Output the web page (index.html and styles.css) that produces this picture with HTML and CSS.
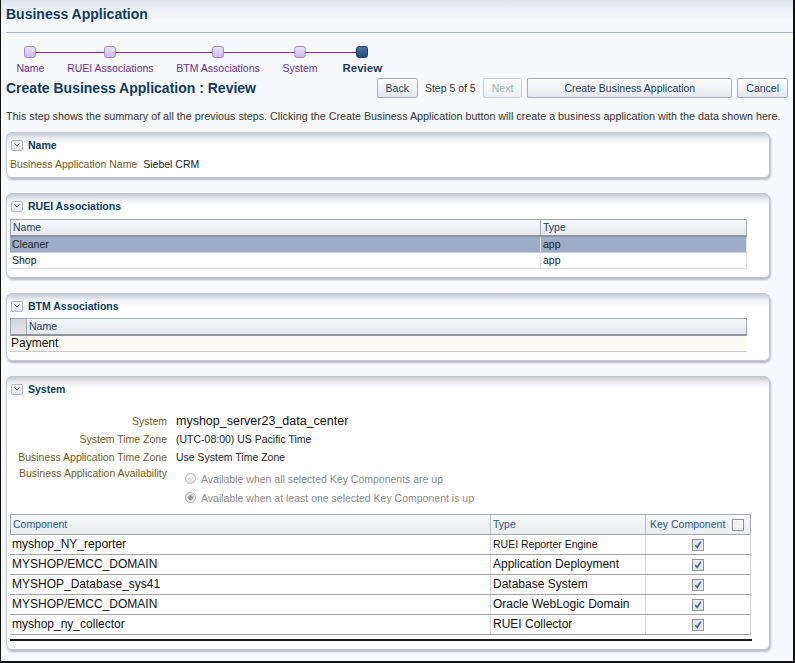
FILE: index.html
```html
<!DOCTYPE html>
<html>
<head>
<meta charset="utf-8">
<title>Business Application</title>
<link rel="stylesheet" href="styles.css">
</head>
<body>
<div class="page">
  <div class="top">
    <h1 class="app-title">Business Application</h1>
  </div>

  <div class="train">
    <div class="step"><div class="stop"><span class="ln"></span><span class="sq"></span><span class="ln"></span></div><div class="lbl">Name</div></div>
    <div class="step"><div class="stop"><span class="ln"></span><span class="sq"></span><span class="ln"></span></div><div class="lbl">RUEI Associations</div></div>
    <div class="step"><div class="stop"><span class="ln"></span><span class="sq"></span><span class="ln"></span></div><div class="lbl">BTM Associations</div></div>
    <div class="step"><div class="stop"><span class="ln"></span><span class="sq"></span><span class="ln"></span></div><div class="lbl">System</div></div>
    <div class="step current"><div class="stop"><span class="ln"></span><span class="sq"></span><span class="ln"></span></div><div class="lbl">Review</div></div>
  </div>

  <div class="titlebar">
    <h2 class="page-title">Create Business Application : Review</h2>
    <div class="actions">
      <button class="btn">Back</button>
      <span class="stepinfo">Step 5 of 5</span>
      <button class="btn" disabled>Next</button>
      <button class="btn wide">Create Business Application</button>
      <button class="btn">Cancel</button>
    </div>
  </div>

  <p class="intro">This step shows the summary of all the previous steps. Clicking the Create Business Application button will create a business application with the data shown here.</p>

  <section class="panel name-panel">
    <div class="ph"><span class="tog"><svg width="8" height="6" viewBox="0 0 8 6"><polyline points="1.5,1.5 4,4.2 6.5,1.5" fill="none" stroke="#444" stroke-width="1"/></svg></span><span class="pt">Name</span></div>
    <div class="frow"><span class="flabel">Business Application Name</span><span class="fval">Siebel CRM</span></div>
  </section>

  <section class="panel">
    <div class="ph"><span class="tog"><svg width="8" height="6" viewBox="0 0 8 6"><polyline points="1.5,1.5 4,4.2 6.5,1.5" fill="none" stroke="#444" stroke-width="1"/></svg></span><span class="pt">RUEI Associations</span></div>
    <div class="tbl ruei">
      <div class="thead"><div class="c-name">Name</div><div class="c-type">Type</div></div>
      <div class="trow sel"><div class="c-name">Cleaner</div><div class="c-type">app</div></div>
      <div class="trow"><div class="c-name">Shop</div><div class="c-type">app</div></div>
    </div>
  </section>

  <section class="panel">
    <div class="ph"><span class="tog"><svg width="8" height="6" viewBox="0 0 8 6"><polyline points="1.5,1.5 4,4.2 6.5,1.5" fill="none" stroke="#444" stroke-width="1"/></svg></span><span class="pt">BTM Associations</span></div>
    <div class="tbl btm">
      <div class="thead"><div class="c-sel"></div><div class="c-rest">Name</div></div>
      <div class="trow cream"><div class="c-all">Payment</div></div>
    </div>
  </section>

  <section class="panel sys-panel">
    <div class="ph"><span class="tog"><svg width="8" height="6" viewBox="0 0 8 6"><polyline points="1.5,1.5 4,4.2 6.5,1.5" fill="none" stroke="#444" stroke-width="1"/></svg></span><span class="pt">System</span></div>
    <div class="form">
      <div class="l">System</div><div class="v big">myshop_server23_data_center</div>
      <div class="l">System Time Zone</div><div class="v">(UTC-08:00) US Pacific Time</div>
      <div class="l">Business Application Time Zone</div><div class="v">Use System Time Zone</div>
      <div class="l l-first">Business Application Availability</div>
      <div class="radios">
        <div class="ropt"><span class="radio"></span>Available when all selected Key Components are up</div>
        <div class="ropt"><span class="radio on"></span>Available when at least one selected Key Component is up</div>
      </div>
    </div>
    <div class="tbl comp">
      <div class="thead">
        <div class="k-comp">Component</div>
        <div class="k-type">Type</div>
        <div class="k-key"><span>Key Component</span><svg class="cb" width="12" height="12" viewBox="0 0 12 12"><rect x="0.5" y="0.5" width="11" height="11" fill="#f3f3f3" stroke="#8e939b"/><rect x="1.5" y="1.5" width="9" height="9" fill="none" stroke="#fff"/></svg></div>
      </div>
      <div class="trow">
        <div class="k-comp">myshop_NY_reporter</div>
        <div class="k-type sm">RUEI Reporter Engine</div>
        <div class="k-key"><svg class="cb" width="12" height="12" viewBox="0 0 12 12"><rect x="0.5" y="0.5" width="11" height="11" fill="#e6e7ea" stroke="#8e939b"/><path d="M3.2 6 L5.2 8.4 L8.8 2.8" fill="none" stroke="#4d5d8e" stroke-width="1.6"/></svg></div>
      </div>
      <div class="trow">
        <div class="k-comp">MYSHOP/EMCC_DOMAIN</div>
        <div class="k-type">Application Deployment</div>
        <div class="k-key"><svg class="cb" width="12" height="12" viewBox="0 0 12 12"><rect x="0.5" y="0.5" width="11" height="11" fill="#e6e7ea" stroke="#8e939b"/><path d="M3.2 6 L5.2 8.4 L8.8 2.8" fill="none" stroke="#4d5d8e" stroke-width="1.6"/></svg></div>
      </div>
      <div class="trow">
        <div class="k-comp">MYSHOP_Database_sys41</div>
        <div class="k-type">Database System</div>
        <div class="k-key"><svg class="cb" width="12" height="12" viewBox="0 0 12 12"><rect x="0.5" y="0.5" width="11" height="11" fill="#e6e7ea" stroke="#8e939b"/><path d="M3.2 6 L5.2 8.4 L8.8 2.8" fill="none" stroke="#4d5d8e" stroke-width="1.6"/></svg></div>
      </div>
      <div class="trow">
        <div class="k-comp">MYSHOP/EMCC_DOMAIN</div>
        <div class="k-type">Oracle WebLogic Domain</div>
        <div class="k-key"><svg class="cb" width="12" height="12" viewBox="0 0 12 12"><rect x="0.5" y="0.5" width="11" height="11" fill="#e6e7ea" stroke="#8e939b"/><path d="M3.2 6 L5.2 8.4 L8.8 2.8" fill="none" stroke="#4d5d8e" stroke-width="1.6"/></svg></div>
      </div>
      <div class="trow">
        <div class="k-comp">myshop_ny_collector</div>
        <div class="k-type">RUEI Collector</div>
        <div class="k-key"><svg class="cb" width="12" height="12" viewBox="0 0 12 12"><rect x="0.5" y="0.5" width="11" height="11" fill="#e6e7ea" stroke="#8e939b"/><path d="M3.2 6 L5.2 8.4 L8.8 2.8" fill="none" stroke="#4d5d8e" stroke-width="1.6"/></svg></div>
      </div>
    </div>
    <div class="tfoot-line"></div>
  </section>
</div>
</body>
</html>
```

FILE: styles.css
```css
* { box-sizing: border-box; }
html, body { margin: 0; padding: 0; }
body {
  font-family: "Liberation Sans", Arial, sans-serif;
  font-size: 10.5px;
  color: #222;
  background: #f7f9fc;
}
.page {
  width: 795px;
  height: 663px;
  border-left: 1px solid #111;
  border-right: 2px solid #111;
  border-bottom: 2px solid #111;
  background: #f7f9fc linear-gradient(#dfe4ee 0, #f7f9fc 18px) no-repeat;
  overflow: hidden;
}

/* header */
.top {
  margin-left: 5px;
  height: 33px;
  padding-bottom: 5px;
  border-bottom: 1px solid #a9b2c2;
  display: flex;
  align-items: center;
}
.app-title {
  margin: 0;
  font-size: 14px;
  font-weight: bold;
  color: #0f3a5c;
}

/* train */
.train {
  display: flex;
  margin-left: 4px;
  padding-top: 13px;
}
.step { display: flex; flex-direction: column; }
.stop { display: flex; align-items: center; height: 12px; }
.ln { flex: 1; height: 1px; background: #8a2b93; }
.step:first-child .ln:first-child,
.step:last-child .ln:last-child { background: transparent; }
.sq {
  width: 12px;
  height: 12px;
  border: 1px solid #a48cd4;
  border-radius: 3px;
  background: linear-gradient(#ebe3fa, #cdbfee);
}
.step.current .sq {
  background: linear-gradient(#4a77a8, #1f4b7a);
  border-color: #1d3f66;
}
.lbl {
  padding: 0 11.4px;
  margin-top: 4px;
  line-height: 13px;
  color: #6a2d8a;
  white-space: nowrap;
}
.step.current .lbl {
  font-weight: bold;
  font-size: 11.5px;
  padding: 0 13.5px;
  color: #1c3b5c;
}

/* title bar */
.titlebar {
  display: flex;
  align-items: center;
  justify-content: space-between;
  height: 20px;
  margin-top: 3px;
  padding: 0 5px;
}
.page-title {
  margin: 0;
  font-size: 14px;
  font-weight: bold;
  color: #0f3a5c;
}
.actions { display: flex; align-items: center; gap: 5px; }
.btn {
  font-family: inherit;
  font-size: 10.5px;
  height: 20px;
  padding: 0 8px;
  border: 1px solid #a5adba;
  border-radius: 2px;
  background: linear-gradient(#ffffff, #e3e7ee);
  color: #1c3a5a;
}
.btn.wide { width: 205px; }
.btn:disabled {
  color: #a9afb9;
  border-color: #c8cdd5;
  background: linear-gradient(#fbfcfd, #eceff3);
}
.stepinfo { color: #333; padding: 0 2px; }

.intro {
  margin: 11px 0 9px 5px;
  line-height: 14px;
  font-size: 10.75px;
  white-space: nowrap;
  color: #333;
}

/* panels */
.panel {
  width: 764px;
  margin: 0 0 15px 5px;
  border: 1px solid #c2c6ce;
  border-radius: 6px;
  background: linear-gradient(#c8ccd5 0, #eef0f4 6px, #ffffff 12px);
  box-shadow: 1px 2px 2px rgba(60, 70, 90, 0.35);
  padding: 4px 0 8px;
}
.name-panel { padding-bottom: 5px; }
.ph {
  display: flex;
  align-items: center;
  height: 16px;
  padding-left: 4px;
  gap: 5px;
}
.tog {
  width: 12px;
  height: 11px;
  border: 1px solid #b1b7c2;
  border-radius: 2px;
  background: linear-gradient(#ffffff, #e1e5ec);
  display: flex;
  align-items: center;
  justify-content: center;
}
.pt { font-weight: bold; color: #0b3b5e; }

.frow {
  display: flex;
  gap: 6px;
  padding-left: 3px;
  margin-top: 3px;
  line-height: 16px;
}
.flabel { color: #735b1e; }
.fval { color: #222; }

/* tables */
.tbl { margin: 5px 0 0 3px; }
.thead {
  display: flex;
  height: 18px;
  border: 1px solid #a2a6ad;
  border-bottom: 2px solid #8f939a;
  background: linear-gradient(#f7f8fa, #e5e7ec);
  color: #1d3a60;
}
.thead > div { line-height: 15px; padding-left: 2px; }
.trow { display: flex; height: 16px; border-bottom: 1px solid #d7dade; }
.trow > div { line-height: 15px; padding-left: 2px; }

.ruei { width: 737px; }
.ruei .c-name { width: 530px; border-right: 1px solid #a2a6ad; }
.ruei .trow .c-name { width: 531px; border-right: 1px solid #e3e5e8; }
.ruei .c-type { flex: 1; }
.ruei .trow .c-type { border-right: 1px solid #e3e5e8; }
.trow.sel { background: #9dacc7; border-bottom-color: #c5ccd8; }
.trow.sel > div { border-right-color: #b8c2d4; }

.btm { width: 737px; margin-top: 4px; }
.btm .c-sel {
  width: 16px;
  border-right: 1px solid #a2a6ad;
  background: linear-gradient(#d2d5dc, #e4e6ea);
}
.btm .c-rest { flex: 1; }
.trow.cream { background: #fcfcf5; border-bottom-color: #c9c9c9; }
.btm .c-all { padding-left: 1px; font-size: 12px; color: #111; }

/* system form */
.form {
  display: grid;
  grid-template-columns: 160px 1fr;
  column-gap: 9px;
  margin-top: 15px;
}
.form .l { text-align: right; color: #735b1e; line-height: 18px; }
.form .l.l-first { line-height: 14px; }
.form .v { line-height: 18px; color: #222; }
.form .v.big { font-size: 12.5px; color: #111; }
.radios { padding: 3px 0 0 9px; }
.ropt {
  display: flex;
  align-items: center;
  gap: 5px;
  height: 19px;
  color: #8c8c8c;
}
.radio {
  width: 11px;
  height: 11px;
  border-radius: 50%;
  border: 1px solid #b9b9b9;
  background: linear-gradient(#f8f8f8, #e2e2e2);
}
.radio.on {
  background: radial-gradient(circle, #9a9a9a 0, #9a9a9a 2px, #d4d4d4 2.8px, #f3f3f3 4px);
  border-color: #a8a8a8;
}

.comp { width: 741px; margin-top: 7px; }
.comp .thead {
  height: 21px;
  border: 1px solid #a6a9b0;
  border-bottom: 1px solid #a6a9b0;
  background: linear-gradient(#f7f8fa, #eaecf0);
  color: #2a568a;
}
.comp .thead > div { line-height: 19px; border-right: 1px solid #b9bdc4; }
.comp .thead > div:last-child { border-right: none; }
.comp .trow { height: 20px; border-bottom: 1px solid #a3a3a3; background: #fff; }
.comp .trow > div {
  line-height: 19px;
  font-size: 12px;
  color: #111;
  border-right: 1px solid #d6d6d6;
}
.comp .trow > div.sm { font-size: 10.5px; }
.k-comp { width: 481px; }
.comp .thead .k-comp { width: 480px; }
.k-type { width: 155px; }
.k-key { flex: 1; }
.comp .thead .k-key {
  display: flex;
  align-items: center;
  justify-content: space-between;
  padding: 0 6px 0 4px;
}
.comp .trow .k-key {
  display: flex;
  align-items: center;
  justify-content: center;
  padding-left: 0;
}
.cb { display: block; }
.tfoot-line {
  width: 742px;
  height: 2px;
  margin: 4px 0 0 3px;
  background: #1a1a1a;
}
```
